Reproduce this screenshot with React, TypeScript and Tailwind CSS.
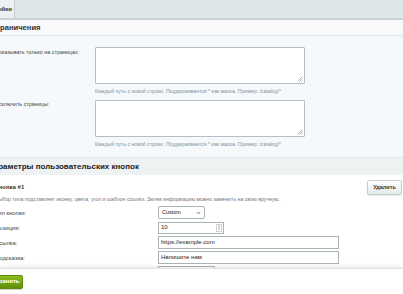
import React from "react";

function Textarea() {
  return (
    <div className="relative w-[210px] h-[37px] bg-white border border-[#b5bfc3] rounded-[1px]">
      <svg className="absolute right-[1px] bottom-[1px]" width="6" height="6" viewBox="0 0 6 6">
        <path d="M5.5 0.5 L0.5 5.5 M5.5 2.5 L2.5 5.5 M5.5 4.5 L4.5 5.5" stroke="#9aa4a8" strokeWidth="0.8" />
      </svg>
    </div>
  );
}

function Hint() {
  return (
    <div className="text-[5.2px] leading-[8px] text-[#8a9296] whitespace-nowrap">
      Каждый путь с новой строки. Поддерживается * как маска. Пример: /catalog/*
    </div>
  );
}

function Label({ children }: { children: React.ReactNode }) {
  return <div className="text-[5.9px] leading-[8px] text-[#444] whitespace-nowrap">{children}</div>;
}

export default function App() {
  return (
    <div className="w-[403px] h-[294px] overflow-hidden relative bg-[#f5f9fc] font-['Liberation_Sans',Arial,sans-serif]">
      {/* tab bar */}
      <div className="h-[20px] bg-[#dfe6e8] border-b-2 border-[#c9d2d5] flex">
        <div className="-ml-[22px] w-[37px] h-[18px] bg-[#edf1f2] border-r border-[#c5cdd0] flex items-center justify-end pr-[2px] text-[6px] font-bold text-[#333]">
          Настройки
        </div>
      </div>

      {/* header 1 */}
      <div className="h-[16px] bg-[#f7f9fa] border-b border-[#e1e7e9] flex items-center">
        <div className="-ml-[9px] text-[7.6px] font-bold text-[#333]">Ограничения</div>
      </div>

      {/* section 1 */}
      <div className="pt-[11px] pb-[9px] flex flex-col gap-[5px]">
        <div className="flex">
          <div className="-ml-[5px] w-[100px] pt-[1px]">
            <div className="text-[5.4px] leading-[8px] text-[#444] whitespace-nowrap">Показывать только на страницах:</div>
          </div>
          <div className="flex flex-col gap-[3px]">
            <Textarea />
            <Hint />
          </div>
        </div>
        <div className="flex">
          <div className="-ml-[5px] w-[100px] pt-[0px]">
            <div className="text-[5.4px] leading-[8px] text-[#444] whitespace-nowrap">Исключить страницы:</div>
          </div>
          <div className="flex flex-col gap-[3px]">
            <Textarea />
            <Hint />
          </div>
        </div>
      </div>

      {/* header 2 */}
      <div className="h-[18px] bg-[#eef2f3] border-t border-[#e1e7e9] flex items-center">
        <div className="-ml-[12px] text-[8px] font-bold text-[#222]">Параметры пользовательских кнопок</div>
      </div>

      {/* section 2 */}
      <div className="bg-white h-[120px] pt-[4px]">
        <div className="flex items-center justify-between h-[16px]">
          <div className="-ml-[5px] text-[6px] font-bold text-[#333]">Кнопка #1</div>
          <button className="mr-[1px] h-[15px] w-[35px] rounded-[2px] border border-[#c6cfd2] bg-gradient-to-b from-[#ffffff] to-[#e3e9ea] text-[5.5px] font-bold text-[#333] shadow-[0_1px_1px_rgba(0,0,0,0.1)]">
            Удалить
          </button>
        </div>
        <div className="-ml-[5px] text-[5.2px] leading-[8px] text-[#777] whitespace-nowrap">
          Выбор типа подставляет иконку, цвета, угол и шаблон ссылки. Затем информацию можно заменить на свою вручную.
        </div>
        <div className="mt-[3px] flex flex-col gap-[2px]">
          <div className="flex items-center h-[13px]">
            <div className="-ml-[5px] w-[163px]"><Label>Тип кнопки:</Label></div>
            <div className="w-[47px] h-[13px] border border-[#aab4b8] rounded-[2px] bg-white flex items-center justify-between px-[3px] text-[5.5px] text-[#222]">
              <span>Custom</span>
              <svg width="5" height="4" viewBox="0 0 5 4"><path d="M0.8 1 L2.5 2.8 L4.2 1" fill="none" stroke="#555" strokeWidth="0.8" /></svg>
            </div>
          </div>
          <div className="flex items-center h-[13px]">
            <div className="-ml-[5px] w-[163px]"><Label>Позиция:</Label></div>
            <div className="w-[66px] h-[12px] border border-[#aab4b8] bg-white flex items-center justify-between pl-[2px] pr-[1px] text-[6px] text-[#222]">
              <span>10</span>
              <div className="w-[6px] h-[8px] border border-[#ccd3d6] flex flex-col items-center justify-center text-[3px] leading-[3px] text-[#888]">
                <span>▲</span><span>▼</span>
              </div>
            </div>
          </div>
          <div className="flex items-center h-[13px]">
            <div className="-ml-[5px] w-[163px]"><Label>Ссылка:</Label></div>
            <div className="w-[181px] h-[13px] border border-[#aab4b8] bg-white flex items-center px-[2px] text-[6px] text-[#222]">
              https://example.com
            </div>
          </div>
          <div className="flex items-center h-[13px]">
            <div className="-ml-[5px] w-[163px]"><Label>Подсказка:</Label></div>
            <div className="w-[181px] h-[13px] border border-[#aab4b8] bg-white flex items-center px-[2px] text-[6px] text-[#222]">
              Напишите нам
            </div>
          </div>
          <div className="flex items-center h-[13px]">
            <div className="-ml-[5px] w-[163px]"></div>
            <div className="w-[57px] h-[13px] border border-[#aab4b8] bg-white"></div>
          </div>
        </div>
      </div>

      {/* footer */}
      <div className="absolute left-0 right-0 bottom-0 h-[26px] bg-white border-t border-[#dfe5e7] shadow-[0_-2px_3px_rgba(0,0,0,0.08)] flex items-center">
        <button className="-ml-[16px] h-[14px] w-[39px] rounded-[2px] bg-gradient-to-b from-[#8fbc1d] to-[#5f8f0a] border border-[#5c8a0b] text-[6px] font-bold text-white flex items-center justify-center shadow-[0_1px_1px_rgba(0,0,0,0.2)]">
          Сохранить
        </button>
      </div>
    </div>
  );
}
